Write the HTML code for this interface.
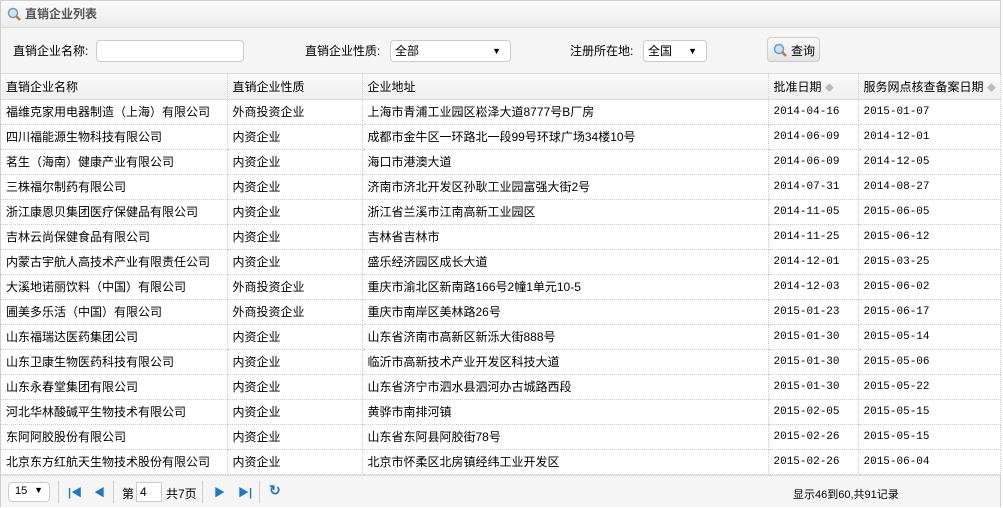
<!DOCTYPE html><html><head><meta charset="utf-8"><style>
*{margin:0;padding:0;box-sizing:border-box}
body{width:1003px;height:508px;background:#fff;font-family:"Liberation Sans","Noto Sans CJK SC",sans-serif;font-size:12px;color:#000;overflow:hidden}
.w{position:absolute;left:0;top:0;width:1001px;height:507px;border:1px solid #cfcfcf;background:#f5f5f5}
.t{height:27px;border-bottom:1px solid #d8d8d8;background:linear-gradient(#fafafa,#ececec);font-weight:bold;color:#555;line-height:26px;padding-left:24px;position:relative}
.f{height:46px;position:relative;background:#f5f5f5;border-bottom:1px solid #ddd}
.f span,.f div{position:absolute}
.inp{background:#fff;border:1px solid #ccc;border-radius:4px;height:22px}
.sel{line-height:20px;padding:0 4px !important}
.sel b{position:absolute;right:9px;top:0;font-size:9px;font-weight:normal}
table{border-collapse:collapse;table-layout:fixed;width:999px;background:#fff}
td,th{height:25px;border-right:1px dotted #ccc;border-bottom:1px dotted #ccc;padding-left:5px;text-align:left;font-weight:normal;white-space:nowrap;overflow:hidden}
th{background:linear-gradient(#fafafa,#efefef);height:25px;border-bottom:1px solid #ddd}
td.d{font-family:"Liberation Mono","Noto Sans CJK SC",monospace;font-size:11px}
.p{position:absolute;left:0;top:474px;width:999px;height:32px;background:#f5f5f5;border-top:1px solid #ddd}
.p span,.p i{position:absolute;font-style:normal}
.sep{width:1px;height:22px;top:5px;background:#ccc}
.ar{color:#1b78c7}
</style></head><body><div class="w">
<div class="t"><svg style="position:absolute;left:6px;top:6px" width="14" height="14"><circle cx="6" cy="6" r="4.5" fill="#cfe3f7" stroke="#6e9cc8" stroke-width="1.5"/><path d="M9 9l4 4" stroke="#b08040" stroke-width="2.5"/></svg>直销企业列表</div>
<div class="f">
<span style="left:12px;top:14px">直销企业名称:</span>
<div class="inp" style="left:95px;top:12px;width:148px"></div>
<span style="left:304px;top:14px">直销企业性质:</span>
<div class="inp sel" style="left:389px;top:12px;width:121px">全部<b>▼</b></div>
<span style="left:569px;top:14px">注册所在地:</span>
<div class="inp sel" style="left:642px;top:12px;width:64px">全国<b>▼</b></div>
<div class="inp" style="left:766px;top:9px;width:53px;height:25px;background:linear-gradient(#fafafa,#e4e4e4);border-radius:4px;padding:4px 0 0 23px">查询<svg style="position:absolute;left:5px;top:5px" width="15" height="15"><circle cx="6" cy="6" r="4.5" fill="#cfe3f7" stroke="#6e9cc8" stroke-width="1.5"/><path d="M9 9l4 4" stroke="#b08040" stroke-width="2.5"/></svg></div>
</div>
<table><colgroup><col style="width:226px"><col style="width:135px"><col style="width:406px"><col style="width:90px"><col style="width:142px"></colgroup>
<tr><th>直销企业名称</th><th>直销企业性质</th><th>企业地址</th><th>批准日期 <span style="color:#bbb;font-size:9px">◆</span></th><th>服务网点核查备案日期 <span style="color:#bbb;font-size:9px">◆</span></th></tr>
<tr><td>福维克家用电器制造（上海）有限公司</td><td>外商投资企业</td><td>上海市青浦工业园区崧泽大道8777号B厂房</td><td class="d">2014-04-16</td><td class="d">2015-01-07</td></tr>
<tr><td>四川福能源生物科技有限公司</td><td>内资企业</td><td>成都市金牛区一环路北一段99号环球广场34楼10号</td><td class="d">2014-06-09</td><td class="d">2014-12-01</td></tr>
<tr><td>茗生（海南）健康产业有限公司</td><td>内资企业</td><td>海口市港澳大道</td><td class="d">2014-06-09</td><td class="d">2014-12-05</td></tr>
<tr><td>三株福尔制药有限公司</td><td>内资企业</td><td>济南市济北开发区孙耿工业园富强大街2号</td><td class="d">2014-07-31</td><td class="d">2014-08-27</td></tr>
<tr><td>浙江康恩贝集团医疗保健品有限公司</td><td>内资企业</td><td>浙江省兰溪市江南高新工业园区</td><td class="d">2014-11-05</td><td class="d">2015-06-05</td></tr>
<tr><td>吉林云尚保健食品有限公司</td><td>内资企业</td><td>吉林省吉林市</td><td class="d">2014-11-25</td><td class="d">2015-06-12</td></tr>
<tr><td>内蒙古宇航人高技术产业有限责任公司</td><td>内资企业</td><td>盛乐经济园区成长大道</td><td class="d">2014-12-01</td><td class="d">2015-03-25</td></tr>
<tr><td>大溪地诺丽饮料（中国）有限公司</td><td>外商投资企业</td><td>重庆市渝北区新南路166号2幢1单元10-5</td><td class="d">2014-12-03</td><td class="d">2015-06-02</td></tr>
<tr><td>圃美多乐活（中国）有限公司</td><td>外商投资企业</td><td>重庆市南岸区美林路26号</td><td class="d">2015-01-23</td><td class="d">2015-06-17</td></tr>
<tr><td>山东福瑞达医药集团公司</td><td>内资企业</td><td>山东省济南市高新区新泺大街888号</td><td class="d">2015-01-30</td><td class="d">2015-05-14</td></tr>
<tr><td>山东卫康生物医药科技有限公司</td><td>内资企业</td><td>临沂市高新技术产业开发区科技大道</td><td class="d">2015-01-30</td><td class="d">2015-05-06</td></tr>
<tr><td>山东永春堂集团有限公司</td><td>内资企业</td><td>山东省济宁市泗水县泗河办古城路西段</td><td class="d">2015-01-30</td><td class="d">2015-05-22</td></tr>
<tr><td>河北华林酸碱平生物技术有限公司</td><td>内资企业</td><td>黄骅市南排河镇</td><td class="d">2015-02-05</td><td class="d">2015-05-15</td></tr>
<tr><td>东阿阿胶股份有限公司</td><td>内资企业</td><td>山东省东阿县阿胶街78号</td><td class="d">2015-02-26</td><td class="d">2015-05-15</td></tr>
<tr><td>北京东方红航天生物技术股份有限公司</td><td>内资企业</td><td>北京市怀柔区北房镇经纬工业开发区</td><td class="d">2015-02-26</td><td class="d">2015-06-04</td></tr>
</table>
<div class="p">
<div class="inp" style="position:absolute;left:7px;top:6px;width:42px;height:20px;padding:2px 6px;font-size:11px">15<span style="position:absolute;right:6px;top:2px;font-size:9px">▼</span></div>
<i class="sep" style="left:57px"></i>
<span class="ar" style="left:67px;top:8px;font-size:11px;font-weight:bold">|◀</span>
<span class="ar" style="left:93px;top:8px;font-size:11px">◀</span>
<i class="sep" style="left:112px"></i>
<span style="left:121px;top:9px">第</span>
<div class="inp" style="position:absolute;left:135px;top:6px;width:26px;height:20px;border-radius:0;padding:2px 3px">4</div>
<span style="left:165px;top:9px">共7页</span>
<i class="sep" style="left:201px"></i>
<span class="ar" style="left:213px;top:8px;font-size:11px">▶</span>
<span class="ar" style="left:237px;top:8px;font-size:11px;font-weight:bold">▶|</span>
<i class="sep" style="left:258px"></i>
<span class="ar" style="left:268px;top:6px;font-size:14px;font-weight:bold">↻</span>
<span style="left:792px;top:10px;font-size:11px">显示46到60,共91记录</span>
</div>
</div></body></html>
